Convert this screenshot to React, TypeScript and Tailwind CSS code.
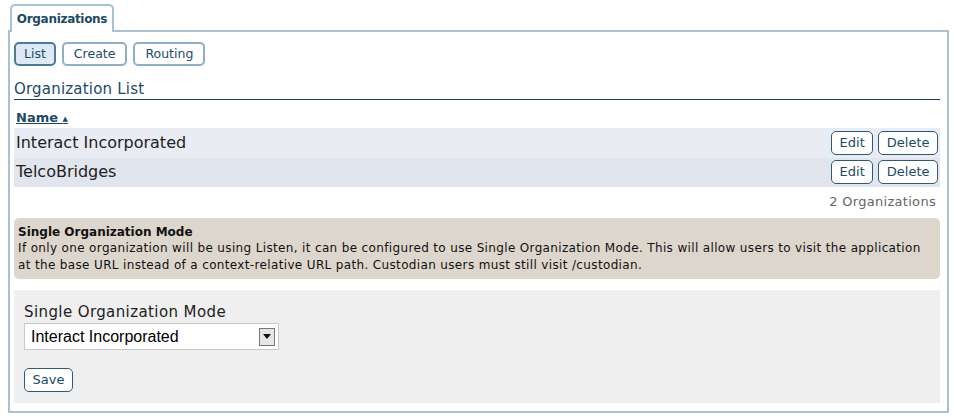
import React from 'react';

const font = { fontFamily: '"DejaVu Sans", sans-serif' };

const Btn: React.FC<{ label: string; active?: boolean; big?: boolean }> = ({ label, active, big }) => (
  <button
    className={
      active
        ? 'h-[24px] px-[8px] rounded-[5px] border-2 border-[#4f7a94] bg-[#dde9f4] text-[12.5px] text-[#1e4a66]'
        : big
        ? 'h-[24px] px-[7.5px] rounded-[5px] border border-[#2f5a75] bg-white text-[13px] text-[#1e4a66]'
        : 'h-[24px] px-[10px] rounded-[5px] border-2 border-[#8fb0c4] bg-white text-[12.5px] text-[#1e4a66]'
    }
  >
    {label}
  </button>
);

const orgs = ['Interact Incorporated', 'TelcoBridges'];

export default function App() {
  return (
    <div className="w-[954px] h-[417px] bg-white px-[8px] pt-[4px]" style={font}>
      <div className="ml-[2px] w-[104px] h-[28px] -mb-[2px] relative z-10 bg-white border-2 border-b-0 border-[#a7c2d3] rounded-t-[5px] flex items-center justify-center">
        <span className="text-[12px] font-bold text-[#1e4a66] tracking-[-0.3px]">Organizations</span>
      </div>
      <div className="w-[941px] h-[383px] border-2 border-[#a7c2d3] pl-[4px] pr-[7px] pt-[10px]">
        <div className="flex gap-[6px]">
          <Btn label="List" active />
          <Btn label="Create" />
          <Btn label="Routing" />
        </div>
        <div className="mt-[13px] text-[15px] text-[#1e4a66] border-b border-[#1e3d52] leading-[20px] tracking-[0.2px]">
          Organization List
        </div>
        <div className="mt-[9px] pl-[2px] text-[13px] font-bold text-[#1e4a66] underline leading-[18px]">
          Name <span className="text-[7px] align-middle">▲</span>
        </div>
        {orgs.map((o, i) => (
          <div
            key={o}
            className={
              i === 0
                ? 'h-[30px] flex items-center justify-between bg-[#e9ecf3] pl-[2px] pr-[2px]'
                : 'h-[29px] flex items-center justify-between bg-[#e1e5ee] pl-[2px] pr-[2px]'
            }
          >
            <span className="text-[16px] text-[#222]">{o}</span>
            <div className="flex gap-[5px]">
              <Btn label="Edit" big />
              <Btn label="Delete" big />
            </div>
          </div>
        ))}
        <div className="text-right text-[13px] text-[#666] mt-[6px] pr-[4px] leading-[18px] tracking-[0.3px]">
          2 Organizations
        </div>
        <div className="mt-[7px] bg-[#ddd6cc] rounded-[5px] px-[4px] pt-[6px] pb-[6px] text-[12px] text-[#111] leading-[16.5px]">
          <div className="font-bold">Single Organization Mode</div>
          <div className="tracking-[0.35px]">
            If only one organization will be using Listen, it can be configured to use Single Organization Mode. This will allow users to visit the application at the base URL instead of a context-relative URL path. Custodian users must still visit /custodian.
          </div>
        </div>
        <div className="mt-[11px] h-[113px] bg-[#efefef] px-[10px] pt-[11px]">
          <div className="text-[15px] text-[#222] leading-[22px] tracking-[0.4px]">Single Organization Mode</div>
          <div className="w-[255px] h-[27px] bg-white border border-[#c8c8c8] flex items-center justify-between pl-[6px] pr-[3px]">
            <span className="text-[16px] text-black" style={{ fontFamily: '"Liberation Sans", sans-serif' }}>
              Interact Incorporated
            </span>
            <div className="w-[16px] h-[18px] border border-[#777] bg-[#e6e6e6] flex items-center justify-center">
              <svg width="8" height="5" viewBox="0 0 8 5">
                <path d="M0 0h8L4 5z" fill="#111" />
              </svg>
            </div>
          </div>
          <div className="mt-[17px]">
            <Btn label="Save" big />
          </div>
        </div>
      </div>
    </div>
  );
}
